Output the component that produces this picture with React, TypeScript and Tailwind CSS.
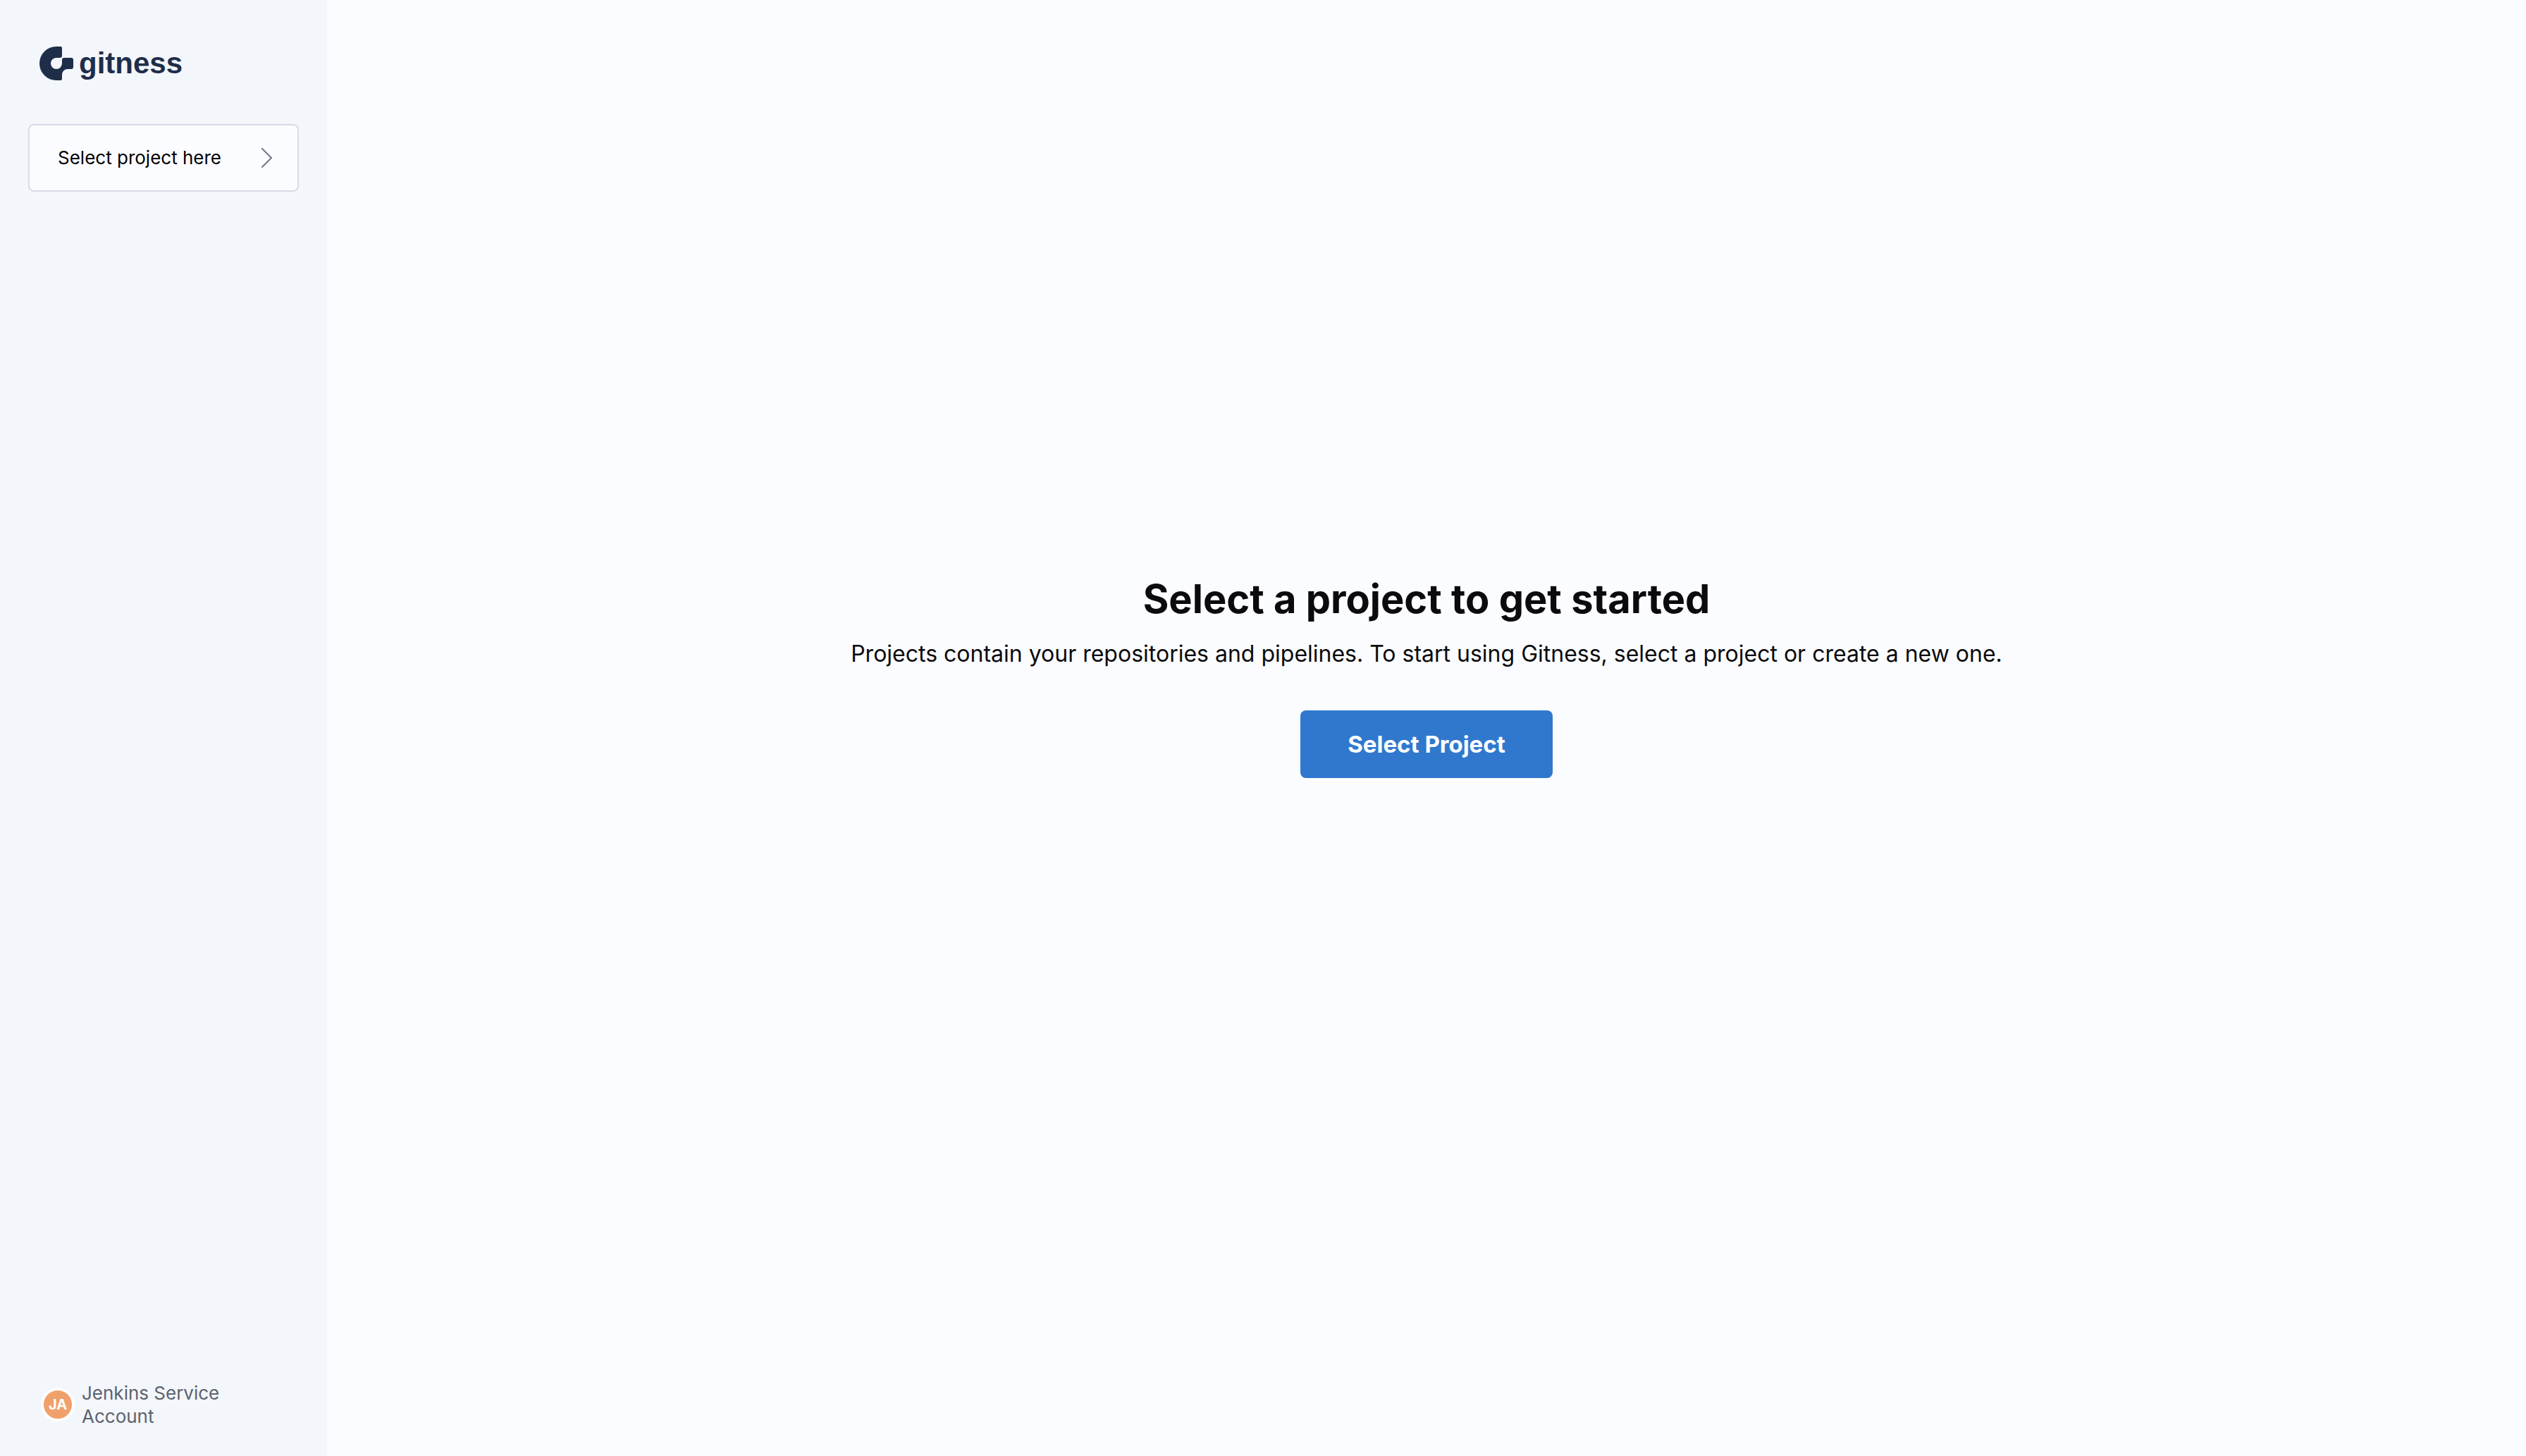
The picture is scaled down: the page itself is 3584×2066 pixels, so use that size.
function GitnessMark() {
  return (
    <svg viewBox="0 0 48 48" className="size-12 shrink-0" fill="#1e2e49" aria-hidden="true">
      <path d="M24 0H30Q32 0 32 2V13Q32 16 29 16H24A8 8 0 1 0 32 24V19Q32 16 35 16H45Q48 16 48 19V29Q48 32 45 32H40A8 8 0 0 0 32 40V46Q32 48 30 48H24A24 24 0 0 1 24 0Z" />
    </svg>
  );
}

function Sidebar() {
  return (
    <aside className="flex w-[464px] shrink-0 flex-col bg-[#f3f6fb] px-10 pt-[66px] pb-10">
      <a href="#" aria-label="gitness" className="flex h-12 items-center gap-2 self-start pl-4 text-[#1e2e49]">
        <GitnessMark />
        <span className="font-['Liberation_Sans',sans-serif] text-[42px] leading-12 font-bold">gitness</span>
      </a>

      <button
        type="button"
        className="mt-[62px] flex h-24 w-full items-center justify-between rounded-lg border-2 border-[#d9dae6] bg-[#fbfcff] pr-9 pl-10 text-left text-[26px] leading-8 text-black"
      >
        <span>Select project here</span>
        <svg viewBox="0 0 16 28" className="h-7 w-4 shrink-0" fill="none" stroke="#73748f" strokeWidth="2" aria-hidden="true">
          <path d="M2 1L15 14L2 27" strokeLinecap="round" strokeLinejoin="round" />
        </svg>
      </button>

      <a href="#" className="mt-auto flex items-center gap-2.5 pl-[18px] text-[26px] leading-[33px] text-[#5d626d]">
        <span className="flex size-12 shrink-0 items-center justify-center rounded-full border-4 border-white bg-[#f0a06a] text-xl font-bold text-white">
          JA
        </span>
        <span className="w-56">Jenkins Service Account</span>
      </a>
    </aside>
  );
}

export default function App() {
  return (
    <div className="flex min-h-screen bg-[#fbfcff] font-[Inter,sans-serif]">
      <Sidebar />
      <main className="flex flex-1 flex-col items-center justify-center pb-[146px]">
        <h1 className="text-[56px] leading-[68px] font-bold text-[#0b0b0d]">Select a project to get started</h1>
        <p className="mt-6 text-[32px] leading-10 text-[#0b0b0d]">
          Projects contain your repositories and pipelines. To start using Gitness, select a project or create a new one.
        </p>
        <button
          type="button"
          className="mt-15 flex h-24 min-w-[358px] items-center justify-center rounded-lg bg-[#3078ce] px-12 text-[33px] leading-10 font-bold text-white"
        >
          Select Project
        </button>
      </main>
    </div>
  );
}
